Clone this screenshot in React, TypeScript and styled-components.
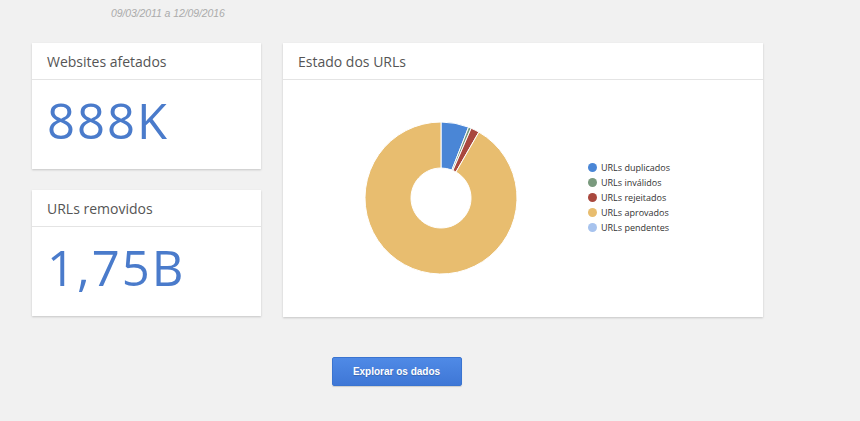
import React from 'react';
import styled, { createGlobalStyle } from 'styled-components';

const GlobalStyle = createGlobalStyle`
  html, body {
    margin: 0;
    padding: 0;
    background: #f1f1f1;
    font-family: 'Open Sans', 'Liberation Sans', Arial, sans-serif;
  }
`;

const Page = styled.div`
  width: 860px;
  height: 421px;
  overflow: hidden;
  padding: 0 0 0 32px;
  box-sizing: border-box;
`;

const DateRange = styled.div`
  height: 43px;
  padding: 7px 0 0 79px;
  box-sizing: border-box;
  font-family: 'Liberation Sans', Arial, sans-serif;
  font-style: italic;
  font-size: 10.5px;
  color: #ababab;
  letter-spacing: -0.1px;
`;

const Grid = styled.div`
  display: flex;
  gap: 22px;
  width: 731px;
`;

const Column = styled.div`
  display: flex;
  flex-direction: column;
  gap: 21px;
  width: 229px;
`;

const Card = styled.div<{ $height: number; $width?: number }>`
  background: #fff;
  width: ${p => (p.$width ? `${p.$width}px` : '100%')};
  height: ${p => p.$height}px;
  box-shadow: 0 1px 2px rgba(0, 0, 0, 0.18);
  display: flex;
  flex-direction: column;
`;

const CardHeader = styled.div`
  height: 37px;
  flex-shrink: 0;
  border-bottom: 1px solid #e4e4e4;
  box-sizing: border-box;
  display: flex;
  align-items: center;
  padding-left: 15px;
  font-size: 14px;
  color: #555;
`;

const BigValue = styled.div`
  flex: 1;
  display: flex;
  align-items: center;
  padding: 0 0 10px 15px;
  font-size: 49px;
  font-weight: 400;
  color: #4a7bcb;
  letter-spacing: 2px;
`;

const ChartBody = styled.div`
  flex: 1;
  display: flex;
  align-items: center;
  padding-left: 78px;
  padding-bottom: 2px;
`;

const Legend = styled.ul`
  list-style: none;
  margin: 0 0 0 67px;
  padding: 0;
  display: flex;
  flex-direction: column;
  gap: 4px;
`;

const LegendItem = styled.li`
  display: flex;
  align-items: center;
  gap: 4px;
  height: 11px;
  font-size: 9px;
  color: #333;
`;

const Dot = styled.span<{ $color: string }>`
  width: 9px;
  height: 9px;
  border-radius: 50%;
  background: ${p => p.$color};
`;

const Actions = styled.div`
  width: 731px;
  display: flex;
  justify-content: center;
  padding-top: 40px;
`;

const PrimaryButton = styled.button`
  width: 130px;
  height: 29px;
  margin-left: -2px;
  border: 1px solid #3a74d0;
  border-radius: 2px;
  background: linear-gradient(#4f8ae6, #3f77d6);
  color: #fff;
  font-family: 'Liberation Sans', Arial, sans-serif;
  font-weight: bold;
  font-size: 10px;
  text-shadow: 0 1px 1px rgba(0, 0, 0, 0.2);
  box-shadow: 0 1px 1px rgba(0, 0, 0, 0.15);
  cursor: pointer;
`;

type Slice = { label: string; value: number; color: string };

const slices: Slice[] = [
  { label: 'URLs duplicados', value: 5.9, color: '#4a86d6' },
  { label: 'URLs inválidos', value: 0.6, color: '#7a9a7e' },
  { label: 'URLs rejeitados', value: 1.8, color: '#a9483e' },
  { label: 'URLs aprovados', value: 91.7, color: '#e8bd6f' },
  { label: 'URLs pendentes', value: 0, color: '#a7c3ee' },
];

function arcPath(cx: number, cy: number, r: number, ri: number, a0: number, a1: number) {
  const pt = (rad: number, a: number) => [cx + rad * Math.sin(a), cy - rad * Math.cos(a)];
  const large = a1 - a0 > Math.PI ? 1 : 0;
  const [x0, y0] = pt(r, a0);
  const [x1, y1] = pt(r, a1);
  const [x2, y2] = pt(ri, a1);
  const [x3, y3] = pt(ri, a0);
  return `M${x0} ${y0} A${r} ${r} 0 ${large} 1 ${x1} ${y1} L${x2} ${y2} A${ri} ${ri} 0 ${large} 0 ${x3} ${y3} Z`;
}

const Donut: React.FC = () => {
  const total = slices.reduce((s, x) => s + x.value, 0);
  let acc = 0;
  return (
    <svg width="160" height="160" viewBox="0 0 160 160">
      {slices
        .filter(s => s.value > 0)
        .map(s => {
          const a0 = (acc / total) * Math.PI * 2;
          acc += s.value;
          const a1 = (acc / total) * Math.PI * 2;
          return (
            <path
              key={s.label}
              d={arcPath(80, 80, 76, 30, a0, a1)}
              fill={s.color}
              stroke="#fff"
              strokeWidth={1}
            />
          );
        })}
    </svg>
  );
};

export default function App() {
  return (
    <Page>
      <GlobalStyle />
      <DateRange>09/03/2011 a 12/09/2016</DateRange>
      <Grid>
        <Column>
          <Card $height={126}>
            <CardHeader>Websites afetados</CardHeader>
            <BigValue>888K</BigValue>
          </Card>
          <Card $height={126}>
            <CardHeader>URLs removidos</CardHeader>
            <BigValue>1,75B</BigValue>
          </Card>
        </Column>
        <Card $height={274} $width={480}>
          <CardHeader>Estado dos URLs</CardHeader>
          <ChartBody>
            <Donut />
            <Legend>
              {slices.map(s => (
                <LegendItem key={s.label}>
                  <Dot $color={s.color} />
                  {s.label}
                </LegendItem>
              ))}
            </Legend>
          </ChartBody>
        </Card>
      </Grid>
      <Actions>
        <PrimaryButton>Explorar os dados</PrimaryButton>
      </Actions>
    </Page>
  );
}
